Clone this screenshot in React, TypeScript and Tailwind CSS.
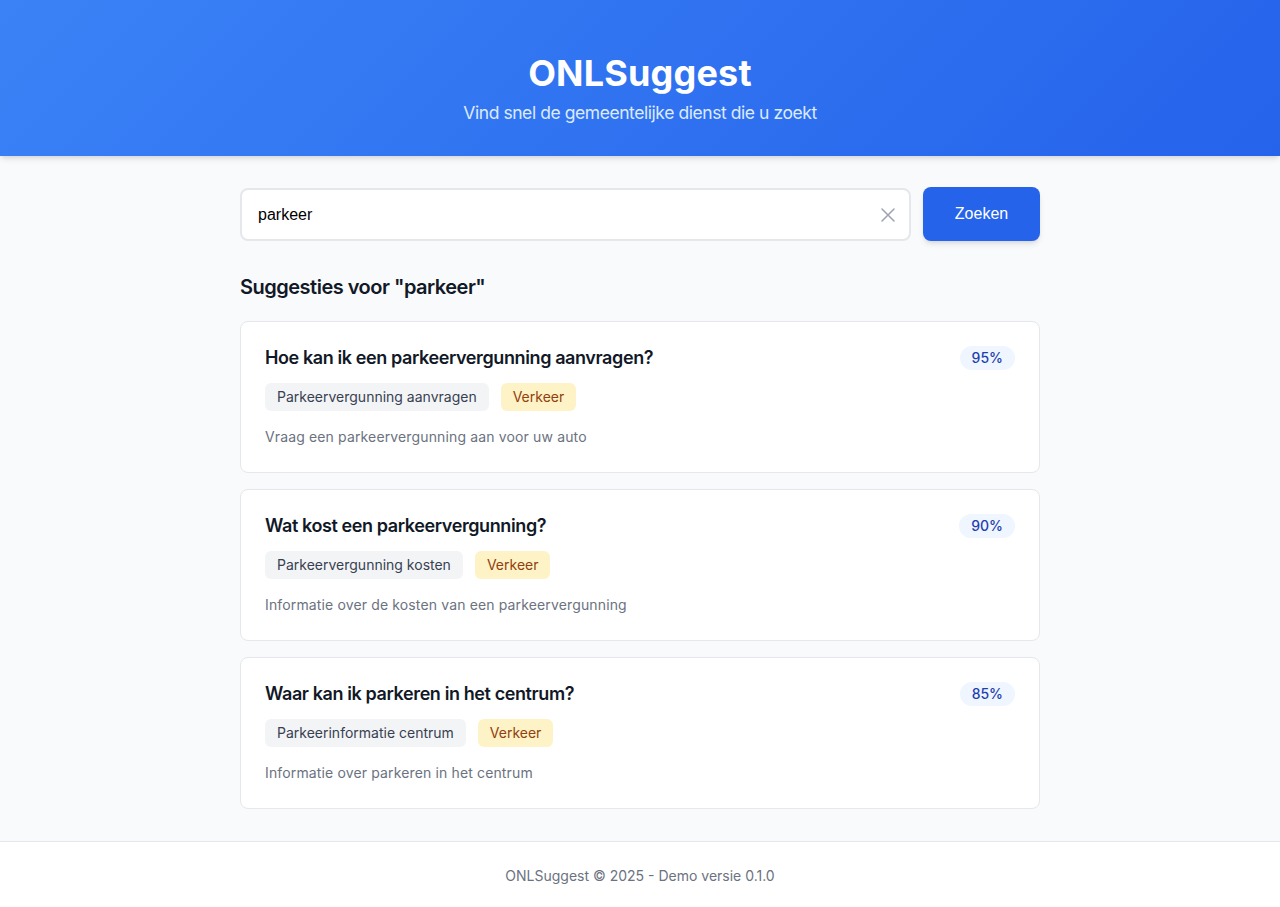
import { useState } from "react";

interface Suggestion {
  question: string;
  service: string;
  category: string;
  description: string;
  score: number;
}

const SUGGESTIONS: Suggestion[] = [
  {
    question: "Hoe kan ik een parkeervergunning aanvragen?",
    service: "Parkeervergunning aanvragen",
    category: "Verkeer",
    description: "Vraag een parkeervergunning aan voor uw auto",
    score: 95,
  },
  {
    question: "Wat kost een parkeervergunning?",
    service: "Parkeervergunning kosten",
    category: "Verkeer",
    description: "Informatie over de kosten van een parkeervergunning",
    score: 90,
  },
  {
    question: "Waar kan ik parkeren in het centrum?",
    service: "Parkeerinformatie centrum",
    category: "Verkeer",
    description: "Informatie over parkeren in het centrum",
    score: 85,
  },
];

function SuggestionCard({ item }: { item: Suggestion }) {
  return (
    <div className="bg-white border border-[#e5e7eb] rounded-lg p-6 pb-[25px]">
      <div className="flex items-start justify-between gap-4">
        <h3 className="-mt-0.5 text-lg font-semibold tracking-[-0.022em] text-[#111827]">{item.question}</h3>
        <span className="shrink-0 rounded-full bg-[#eff6ff] px-3 py-0.5 text-sm font-medium text-[#1e40af]">
          {item.score}%
        </span>
      </div>
      <div className="mt-[11px] flex gap-3">
        <span className="rounded-md bg-[#f3f4f6] px-3 py-1 text-sm text-[#374151]">
          {item.service}
        </span>
        <span className="rounded-md bg-[#fef3c7] px-3 py-1 text-sm text-[#92400e]">
          {item.category}
        </span>
      </div>
      <p className="mt-4 text-sm tracking-[0.01em] text-[#6b7280]">{item.description}</p>
    </div>
  );
}

export default function App() {
  const [query, setQuery] = useState("parkeer");

  return (
    <div className="min-h-screen flex flex-col bg-[#f9fafb] font-['Inter','Liberation_Sans',sans-serif]">
      {/* Header */}
      <header className="bg-[linear-gradient(135deg,#3b82f6,#2563eb)] shadow-md pt-[53px] pb-[29px] text-center text-white">
        <h1 className="text-4xl font-bold tracking-[0.005em]">ONLSuggest</h1>
        <p className="mt-1.5 text-[17.5px] leading-7 tracking-[-0.025em] text-[#dbeafe]">
          Vind snel de gemeentelijke dienst die u zoekt
        </p>
      </header>

      {/* Main */}
      <main className="flex-1 py-8">
        <div className="mx-auto max-w-[800px]">
          <div className="flex gap-3">
            <div className="relative flex-1">
              <input
                value={query}
                onChange={(e) => setQuery(e.target.value)}
                className="h-[53px] w-full rounded-lg border-2 border-[#e5e7eb] bg-white px-4 pr-12 text-base text-black outline-none font-['Liberation_Sans',Arial,sans-serif]"
              />
              {query && (
                <button
                  onClick={() => setQuery("")}
                  className="absolute right-4 top-1/2 -translate-y-1/2 text-[#9ca3af]"
                  aria-label="Wissen"
                >
                  <svg width="14" height="14" viewBox="0 0 14 14" fill="none" stroke="currentColor" strokeWidth="1.5" strokeLinecap="round">
                    <path d="M1 1l12 12M13 1L1 13" />
                  </svg>
                </button>
              )}
            </div>
            <button className="h-[54px] -mt-px w-[117px] rounded-lg bg-[#2563eb] text-base text-white shadow-md font-['Liberation_Sans',Arial,sans-serif]">
              Zoeken
            </button>
          </div>

          <h2 className="mt-8 mb-5 text-xl font-semibold tracking-[-0.025em] text-[#111827]">
            Suggesties voor "{query}"
          </h2>

          <div className="flex flex-col gap-4">
            {SUGGESTIONS.map((s) => (
              <SuggestionCard key={s.question} item={s} />
            ))}
          </div>
        </div>
      </main>

      {/* Footer */}
      <footer className="border-t border-[#e5e7eb] bg-white pt-6 pb-[25px] text-center text-sm text-[#6b7280]">
        ONLSuggest © 2025 - Demo versie 0.1.0
      </footer>
    </div>
  );
}
